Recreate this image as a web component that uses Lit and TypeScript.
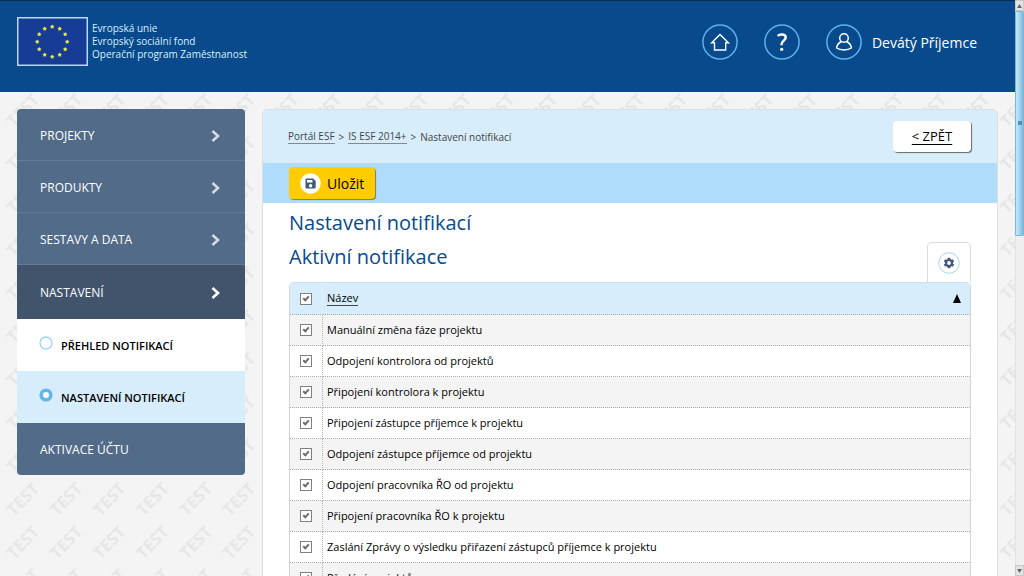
import { LitElement, html, css, svg } from "lit";
import { customElement, state } from "lit/decorators.js";
import { classMap } from "lit/directives/class-map.js";

const fontStack = css`"Trebuchet MS", "Open Sans", "Noto Sans", sans-serif`;

@customElement("test-backdrop")
class TestBackdrop extends LitElement {
  static styles = css`
    :host { display: block; }
    .fill { display: block; width: 100%; height: 100%; }
    .mark { font: 700 21px "Open Sans", sans-serif; fill: #e6e6e6; text-anchor: middle; }
  `;
  render() {
    return html`<svg class="fill" aria-hidden="true">
      <defs>
        <pattern id="stamp" width="54" height="54" patternUnits="userSpaceOnUse" patternTransform="scale(0.8)">
          ${[-54, 0, 54].map((dx) => [-54, 0, 54].map((dy) => svg`
            <text class="mark" transform="translate(${34 + dx} ${35 + dy}) rotate(-46)">TEST</text>`))}
        </pattern>
      </defs>
      <rect width="100%" height="100%" fill="url(#stamp)"></rect>
    </svg>`;
  }
}

@customElement("site-header")
class SiteHeader extends LitElement {
  static styles = css`
    :host { display: block; background: #084a8c; border-top: 1px solid #0a2c52; color: #fff; font-family: ${fontStack}; }
    .bar { display: flex; justify-content: space-between; align-items: flex-start; height: 91px; padding: 0 38px 0 17px; box-sizing: border-box; }
    .brand { display: flex; gap: 4px; padding-top: 16px; }
    .flag { display: block; width: 71px; height: 49px; }
    .names { font-size: 10px; line-height: 13px; padding-top: 5px; font-weight: 500; color: #d9eefb; white-space: nowrap; }
    .tools { display: flex; gap: 26px; padding-top: 23px; }
    .tool { display: flex; align-items: center; gap: 10px; padding: 0; border: 0; background: none; color: #fff; font: 400 14px ${fontStack}; text-decoration: none; white-space: nowrap; }
    .icon { display: block; width: 36px; height: 36px; }
  `;
  private stars() {
    return Array.from({ length: 12 }, (_, i) => {
      const a = (i * Math.PI) / 6;
      return svg`<path transform="translate(${35.2 + 15 * Math.sin(a)} ${24.7 - 15 * Math.cos(a)})" fill="#e8e83c"
        d="M0-2.3.9-1 2.2-.7 1.300 .5 1.4 1.9 0 1.5-1.4 1.9-1.300 .5-2.2-.7-.9-1z"></path>`;
    });
  }
  render() {
    return html`<header class="bar">
      <div class="brand">
        <svg class="flag" viewBox="0 0 71 49" role="img" aria-label="EU">
          <rect x=".75" y=".75" width="69.5" height="47.5" fill="#163c96" stroke="#b9d9f3" stroke-width="1.5"></rect>
          ${this.stars()}
        </svg>
        <div class="names">Evropská unie<br />Evropský sociální fond<br />Operační program Zaměstnanost</div>
      </div>
      <nav class="tools">
        <a class="tool" href="#home" aria-label="home">
          <svg class="icon" viewBox="0 0 36 36" fill="none">
            <circle cx="18" cy="18" r="17.1" stroke="#5fb0ee" stroke-width="1.5"></circle>
            <path d="M12.500 18.800V26h11.200v-7.200h2.700L18 10.500l-8.300 8.300z" stroke="#fff" stroke-width="1.4"></path>
          </svg>
        </a>
        <a class="tool" href="#help" aria-label="help">
          <svg class="icon" viewBox="0 0 36 36" fill="none">
            <circle cx="18" cy="18" r="17.1" stroke="#5fb0ee" stroke-width="1.5"></circle>
            <path d="M13.600 11.800c2.400-2 8.100-2 8.100 1.700 0 3-4.200 3.300-4.200 7v.8" stroke="#fff" stroke-width="2.400"></path>
            <circle cx="17.700" cy="25.300" r="1.600" fill="#fff"></circle>
          </svg>
        </a>
        <button class="tool" type="button">
          <svg class="icon" viewBox="0 0 36 36" fill="none">
            <circle cx="18" cy="18" r="17.1" stroke="#5fb0ee" stroke-width="1.5"></circle>
            <circle cx="18" cy="14" r="4.300" stroke="#fff" stroke-width="1.500"></circle>
            <path d="M15.500 17.500c-3 1.500-4.700 4-4.900 6.500 3.500 2.500 11.300 2.500 14.800 0-.2-2.500-1.900-5-4.900-6.500" stroke="#fff" stroke-width="1.500" stroke-linejoin="round"></path>
          </svg>
          Devátý Příjemce
        </button>
      </nav>
    </header>`;
  }
}

@customElement("side-menu")
class SideMenu extends LitElement {
  static styles = css`
    :host { display: block; font-family: ${fontStack}; }
    .menu { margin: 0; padding: 0; list-style: none; border-radius: 4px; overflow: hidden; }
    .link { display: flex; align-items: center; justify-content: space-between; box-sizing: border-box; height: 52px; padding: 2px 25px 0 23px; background: #516b89; color: #fff; font-size: 12px; text-decoration: none; border-bottom: 1px solid #627c99; }
    .open { height: 54px; background: #42546c; border-bottom-color: #42546c; }
    .last { padding-top: 0; border-bottom: 0; }
    .chev { width: 9px; height: 12px; opacity: 0.75; }
    .open .chev { opacity: 1; }
    .sub { justify-content: flex-start; gap: 8px; padding: 0 22px; background: #fff; color: #000; font-size: 11px; font-weight: 600; border: 0; }
    .current { background: #d7edfc; }
    .dot { width: 14px; height: 14px; margin-bottom: 4px; }
  `;
  private top(label: string, kind = "") {
    return html`<li><a class="link ${kind}" href="#menu">${label}
      ${kind === "last" ? "" : html`<svg class="chev" viewBox="0 0 9 12"><path d="M1.500 1 7 6l-5.500 5" fill="none" stroke="#fff" stroke-width="2.600"></path></svg>`}
    </a></li>`;
  }
  private sub(label: string, current: boolean) {
    return html`<li><a class=${classMap({ link: true, sub: true, current })} href="#sub">
      <svg class="dot" viewBox="0 0 14 14"><circle cx="7" cy="7" r=${current ? 4.8 : 6} fill="#fff"
        stroke=${current ? "#64b5ec" : "#a4d5f3"} stroke-width=${current ? 3.6 : 1.4}></circle></svg>${label}</a></li>`;
  }
  render() {
    return html`<ul class="menu">
      ${this.top("PROJEKTY")}${this.top("PRODUKTY")}${this.top("SESTAVY A DATA")}${this.top("NASTAVENÍ", "open")}
      ${this.sub("PŘEHLED NOTIFIKACÍ", false)}${this.sub("NASTAVENÍ NOTIFIKACÍ", true)}
      ${this.top("AKTIVACE ÚČTU", "last")}
    </ul>`;
  }
}

@customElement("notice-table")
class NoticeTable extends LitElement {
  @state() private rows = [
    "Manuální změna fáze projektu",
    "Odpojení kontrolora od projektů",
    "Připojení kontrolora k projektu",
    "Připojení zástupce příjemce k projektu",
    "Odpojení zástupce příjemce od projektu",
    "Odpojení pracovníka ŘO od projektu",
    "Připojení pracovníka ŘO k projektu",
    "Zaslání Zprávy o výsledku přiřazení zástupců příjemce k projektu",
    "Předání projektů",
  ];
  static styles = css`
    :host { display: block; font-family: ${fontStack}; }
    .grid { width: 100%; table-layout: fixed; border-collapse: separate; border-spacing: 0; border: 1px solid #d5d5d5; border-top-color: #c9e0ee; border-radius: 5px 5px 0 0; font-size: 11px; line-height: 16px; color: #000; }
    .pick { width: 33px; }
    .cell { box-sizing: border-box; height: 31px; padding: 0 4px; text-align: left; font-weight: 500; border-bottom: 1px dotted #a8a8a8; }
    .tick { text-align: center; border-right: 1px dotted #b4b4b4; font-size: 0; }
    .head .cell { height: 32px; background: #d7edfc; }
    .head .tick { border-right-color: #e8f4fc; border-top-left-radius: 4px; }
    .row .cell { background: #fff; }
    .row:nth-child(odd) .cell { background: #f4f4f4; }
    .title { display: flex; align-items: center; justify-content: space-between; padding-right: 5px; }
    .sort { color: #000; text-decoration: none; border-bottom: 1px solid #444; line-height: 14px; }
    .arrow { width: 8px; height: 9px; }
    .box { appearance: none; box-sizing: border-box; width: 12px; height: 12px; margin: 0; border: 1px solid #808080; background: #fff; display: inline-grid; place-items: center; vertical-align: middle; }
    .box:checked::before { content: ""; width: 2px; height: 4px; margin-bottom: 2px; border: solid #6c6c6c; border-width: 0 2px 2px 0; transform: rotate(42deg); }
  `;
  render() {
    return html`<table class="grid">
      <colgroup><col class="pick" /><col /></colgroup>
      <thead><tr class="head">
        <th class="cell tick"><input class="box" type="checkbox" checked aria-label="Název" /></th>
        <th class="cell"><div class="title"><a class="sort" href="#sort">Název</a>
          <svg class="arrow" viewBox="0 0 8 9"><path d="M4 0 8 9H0z"></path></svg></div></th>
      </tr></thead>
      <tbody>${this.rows.map((name, i) => html`<tr class="row">
        <td class="cell tick"><input class="box" id="n${i}" type="checkbox" checked /></td>
        <td class="cell"><label for="n${i}">${name}</label></td>
      </tr>`)}</tbody>
    </table>`;
  }
}

@customElement("notice-panel")
class NoticePanel extends LitElement {
  static styles = css`
    :host { display: block; box-sizing: border-box; background: #fff; border: 1px solid #dcdfe2; border-radius: 5px 5px 0 0; font-family: ${fontStack}; }
    .top { display: flex; align-items: center; justify-content: space-between; height: 53px; padding: 0 26px 0 25px; background: #d7edfc; border-radius: 4px 4px 0 0; }
    .trail { display: flex; gap: 4px; font-size: 10px; line-height: 14px; color: #444; }
    .crumb { color: #444; text-decoration: none; border-bottom: 1px solid #888; line-height: 12px; }
    .back { box-sizing: border-box; width: 78px; height: 31px; border-radius: 4px; background: #fff; box-shadow: 1px 1px 1px #666; color: #000; font-size: 13px; line-height: 31px; text-align: center; text-decoration: underline; text-underline-offset: 3px; }
    .actions { display: flex; align-items: center; height: 40px; padding: 0 26px; background: #b0dcfb; }
    .save { display: flex; align-items: center; gap: 6px; height: 32px; padding: 0 11px; border: 0; border-radius: 4px; background: #fc0; box-shadow: 1px 1px 1px #8a7a3a; color: #000; font: 400 14px ${fontStack}; }
    .disk { width: 21px; height: 21px; }
    .body { padding: 3px 26px 0; }
    .heading { margin: 0; color: #084a8c; font-size: 20px; line-height: 34px; font-weight: 400; }
    .line { display: flex; justify-content: space-between; align-items: flex-start; }
    .tab { box-sizing: border-box; width: 44px; height: 40px; margin-top: 2px; padding: 0; display: grid; place-items: center; border: 1px solid #dcdcdc; border-bottom: 0; border-radius: 5px 5px 0 0; background: #fff; }
    .gear { width: 22px; height: 22px; }
  `;
  render() {
    return html`
      <div class="top">
        <nav class="trail"><a class="crumb" href="#portal">Portál ESF</a><span>&gt;</span><a class="crumb" href="#esf">IS ESF 2014+</a><span>&gt;</span><span>Nastavení notifikací</span></nav>
        <a class="back" href="#back">&lt; ZPĚT</a>
      </div>
      <div class="actions"><button class="save" type="button">
        <svg class="disk" viewBox="0 0 21 21"><circle cx="10.5" cy="10.5" r="10.300" fill="#fff"></circle>
          <path fill="#42597a" fill-rule="evenodd" d="M6.500 5.500h6.700l2.500 2.500v6.500a1 1 0 0 1-1 1H6.500a1 1 0 0 1-1-1v-8a1 1 0 0 1 1-1zm.5 1.500v2.500h5.500V7zm3.600 4a1.700 1.700 0 1 0 0 3.400 1.700 1.700 0 0 0 0-3.400z"></path></svg>Uložit</button></div>
      <div class="body">
        <h1 class="heading">Nastavení notifikací</h1>
        <div class="line"><h2 class="heading">Aktivní notifikace</h2>
          <button class="tab" type="button" aria-label="settings"><svg class="gear" viewBox="0 0 22 22">
            <circle cx="11" cy="11" r="10.300" fill="#fff" stroke="#a9d6ee"></circle>
            <circle cx="11" cy="11" r="3" fill="none" stroke="#42597a" stroke-width="2.200"></circle>
            ${[0, 60, 120, 180, 240, 300].map((a) => svg`<path transform="rotate(${a} 11 11)" d="M9.600 8V5.800h2.800V8z" fill="#42597a"></path>`)}
          </svg></button></div>
        <notice-table></notice-table>
      </div>`;
  }
}

@customElement("scroll-rail")
class ScrollRail extends LitElement {
  static styles = css`
    :host { display: flex; flex-direction: column; background: #efefef; box-shadow: inset 1px 0 #e2e2e2; }
    .end { height: 11px; display: grid; place-items: center; background: #e4e4e6; border: 1px solid #c8c8c8; box-sizing: border-box; }
    .tri { width: 5px; height: 4px; }
    .thumb { height: 39%; display: grid; place-items: center; box-sizing: border-box; border: 1px solid #82b5d0; border-radius: 1px; background: linear-gradient(90deg, #c3e9fa, #a5d6f0 50%, #7db8d8); }
    .grip { width: 4px; height: 4px; background: #4d94b8; }
    .space { flex: 1; }
  `;
  render() {
    return html`
      <div class="end"><svg class="tri" viewBox="0 0 5 4"><path d="M2.500 0 5 4H0z" fill="#666"></path></svg></div>
      <div class="thumb"><div class="grip"></div></div>
      <div class="space"></div>
      <div class="end"><svg class="tri" viewBox="0 0 5 4"><path d="M2.500 4 5 0H0z" fill="#666"></path></svg></div>`;
  }
}

@customElement("app-root")
class AppRoot extends LitElement {
  static styles = css`
    :host { display: grid; grid-template-columns: minmax(0, 1fr) 9px; height: 100vh; overflow: hidden; }
    .page { position: relative; min-width: 0; height: 100vh; overflow: hidden; background: #f4f4f4; }
    .backdrop { position: absolute; inset: 0; }
    .front { position: relative; }
    .columns { display: grid; grid-template-columns: 228px minmax(0, 1fr); gap: 17px; align-items: start; padding: 17px 17px 0; }
  `;
  render() {
    return html`
      <div class="page">
        <test-backdrop class="backdrop"></test-backdrop>
        <div class="front">
          <site-header></site-header>
          <main class="columns"><side-menu></side-menu><notice-panel></notice-panel></main>
        </div>
      </div>
      <scroll-rail></scroll-rail>`;
  }
}
